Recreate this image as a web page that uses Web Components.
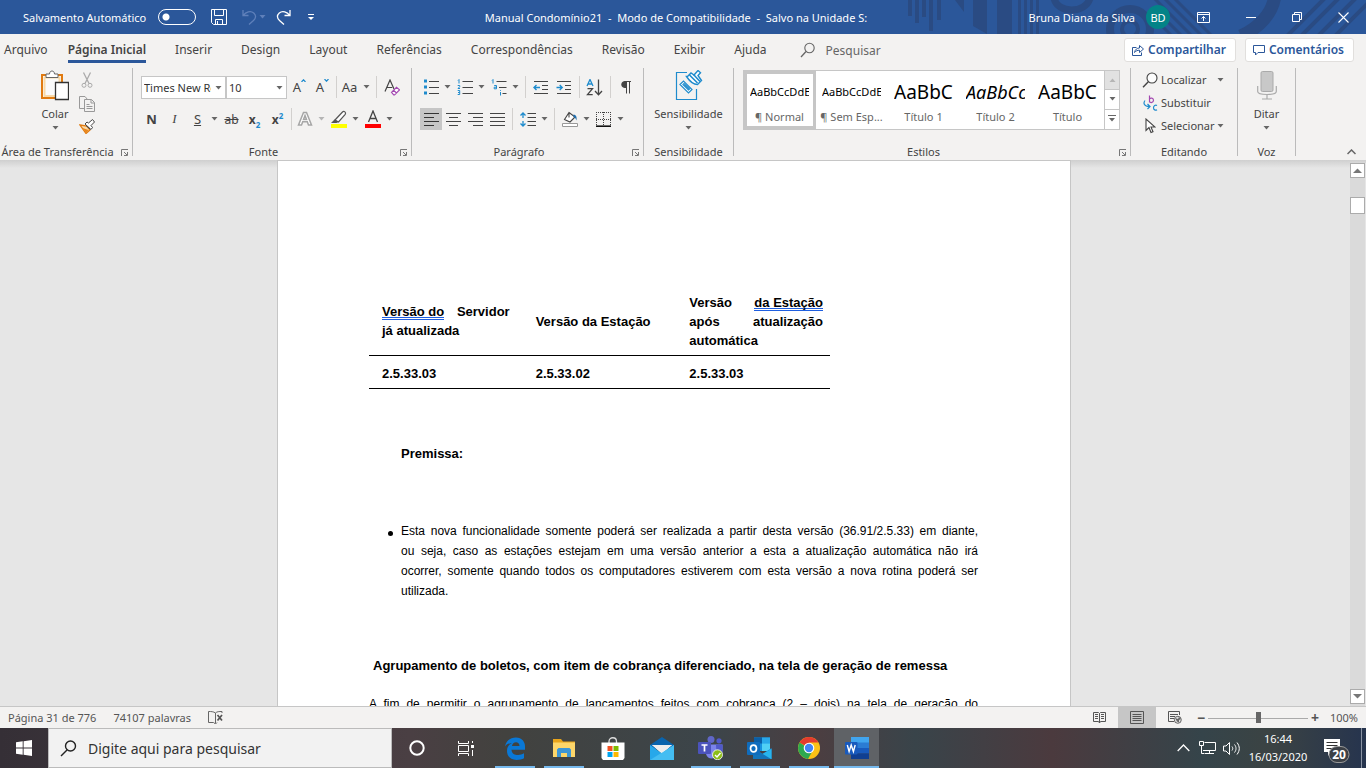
<!DOCTYPE html>
<html lang="pt-BR">
<head>
<meta charset="utf-8">
<title>Manual Condomínio21 - Word</title>
<style>
html,body{height:100%;margin:0}
body{font-family:"Noto Sans","Open Sans",sans-serif;font-size:12px;color:#444;overflow:hidden}
</style>
</head>
<body>
<word-app></word-app>
<script>
const ICONS={
 down:[7,4,'<path d="M0.5 0h6L3.5 3.5z" fill="#666"/>'],
 downLight:[7,4,'<path d="M0.5 0h6L3.5 3.5z" fill="#b5b5b5"/>'],
 up:[7,4,'<path d="M0.5 4h6L3.5 .5z" fill="#b5b5b5"/>'],
 scrollUp:[9,5,'<path d="M0 5h9L4.5 .5z" fill="#777"/>'],
 scrollDown:[9,5,'<path d="M0 0h9L4.5 4.5z" fill="#777"/>'],
 more:[8,8,'<path d="M0 .5h8" stroke="#666"/><path d="M1 3h6L4 6.500z" fill="#666"/>'],
 save:[16,16,'<path d="M.5.5h15v15H2.500l-2-2z M3.500.5v6h9v-6 M4.500 15.500v-5h7v5 M6.500 12v3" fill="none" stroke="#fff"/>'],
 undo:[15,16,'<path d="M1 1v5.500h5.500 M1.200 6.300C4 3 8.500 1.300 11.700 4c2.700 2.400 2.300 5.200-.2 7.500L7 15.500" fill="none" stroke="#5f80ba" stroke-width="1.300"/>'],
 undoDrop:[7,4,'<path d="M0.500 0h6L3.500 3.500z" fill="#5f80ba"/>'],
 redo:[15,16,'<path d="M14 1v5.500H8.500 M13.800 6.300C11 3 6.500 1.300 3.300 4 .6 6.400 1 9.200 3.500 11.500L8 15.500" fill="none" stroke="#fff" stroke-width="1.300"/>'],
 customize:[6,7,'<path d="M0 .5h6" stroke="#fff"/><path d="M0 3h6L3 6z" fill="#fff"/>'],
 ribbonOpts:[13,11,'<path d="M.5.500h12v10H.5z M.5 2.500h12 M6.500 9V4.500 M4.500 6.500l2-2 2 2" fill="none" stroke="#fff"/>'],
 min:[10,10,'<path d="M0 5.500h10" stroke="#fff"/>'],
 restore:[10,10,'<path d="M.5 2.500h7v7h-7z M2.500 2.500v-2h7v7h-2" fill="none" stroke="#fff"/>'],
 close:[11,11,'<path d="M.5.5l10 10M10.500.5l-10 10" stroke="#fff" stroke-width="1.100"/>'],
 search:[16,16,'<circle cx="9.500" cy="6" r="4.700" fill="none" stroke="#666" stroke-width="1.100"/><path d="M6 9.500L1 15" stroke="#666" stroke-width="1.300"/>'],
 share:[12,12,'<path d="M4.500 3.500H.5v8h9V8.500 M2.500 8.500c.5-3 2.500-4.500 5-4.500V1.500l4 3.500-4 3.500V6.200C5.500 6.200 4 6.800 2.500 8.500z" fill="none" stroke="#2b579a"/>'],
 comment:[12,11,'<path d="M.5.5h11v7H5L2.500 10V7.500h-2z" fill="none" stroke="#2b579a"/>'],
 paste:[28,31,'<path d="M1 5h20v23H1z" fill="#fcfcfc" stroke="#e07a10" stroke-width="2"/><path d="M3.500 7.500h15v18.500h-15z" fill="#fafafa" stroke="#f8d9a8" stroke-width="2"/><path d="M5 7.500V4h3.500c0-4 5-4 5 0H17v3.500z" fill="#fff" stroke="#666"/><path d="M14.500 12.500h13v17h-13z" fill="#fff" stroke="#333" stroke-width="1.300"/>'],
 cut:[12,16,'<path d="M2.500.5l5.500 11M9.500.5L4 11.500" stroke="#aaa" stroke-width="1.300" fill="none"/><circle cx="3" cy="13.300" r="2" fill="none" stroke="#aaa"/><circle cx="9" cy="13.300" r="2" fill="none" stroke="#aaa"/>'],
 copy:[16,16,'<path d="M8.500 3.500L6 .5H.5v12h5" fill="none" stroke="#999"/><path d="M5.500 3.500h7l3 3v9h-10z M12 3.500V7h3.500 M7.500 8.500h3M7.500 10.500h6M7.500 12.500h6" fill="none" stroke="#999"/>'],
 brush:[16,15,'<path d="M1 6l7 1 3 4-4 3.500z" fill="#fbd9a5" stroke="#e07a10" stroke-width="1.300"/><path d="M3.500 9l6 2-2.500 3z" fill="#e9861a"/><path d="M6 5l6 5.500 1.500-2-1.500-2L15.500 3l-2-2.500L9.500 4 8 3z" fill="#fff" stroke="#444"/><path d="M7 6.500l4 3.500" stroke="#444"/>'],
 dialog:[7,7,'<path d="M.5 7V.500H7 M3 3l3 3 M6.500 3v3.500H3" fill="none" stroke="#777"/>'],
 collapse:[9,6,'<path d="M.5 5l4-4 4 4" fill="none" stroke="#666" stroke-width="1.500"/>'],
 caretUp:[5,3,'<path d="M.5 3l2-2.200L4.500 3" fill="none" stroke="#1e8bcd" stroke-width="1.200"/>'],
 caretDown:[5,3,'<path d="M.5 0l2 2.200L4.500 0" fill="none" stroke="#1e8bcd" stroke-width="1.200"/>'],
 eraser:[16,17,'<path d="M1 12.500L6 1l4 9M2.700 8.500h5.500" fill="none" stroke="#444" stroke-width="1.200"/><path d="M7.500 13.300l5-5 3 2.500-5 5.200H9.700z M9.500 11.300l3 2.700" fill="#fff" stroke="#a349b1" stroke-width="1.200"/>'],
 textfx:[16,16,'<path d="M1.500 14L6.500 1.500h3l5 12.500h-3l-1.200-3.200H5.700L4.500 14z M8 4.500L6.500 8.500h3z" fill="#fff" stroke="#a6a6a6" stroke-width="1.500"/>'],
 highlight:[18,18,'<path d="M5 10l7.500-8c1.500-1.500 4 .5 2.700 2.300L8.500 12z" fill="#fff" stroke="#555" stroke-width="1.200"/><path d="M4.500 9.500L8.500 12 6.500 13H1z" fill="#555"/><path d="M1 14h16v4H1z" fill="#ff0"/>'],
 fontcolor:[16,18,'<path d="M3.500 12L8 1l4.500 11M5 8.500h6" fill="none" stroke="#444" stroke-width="1.300"/><path d="M0 14h16v4H0z" fill="#f00"/>'],
 bullets:[16,16,'<path d="M1 .5h3v3H1zM1 6.500h3v3H1zM1 12.500h3v3H1z" fill="#1e8bcd"/><path d="M6 2.500h10M6 8.500h10M6 14.500h10" stroke="#444"/>'],
 numbers:[16,17,'<path d="M1 1.500l1-1v4M.7 6.500h2v1.200L1 9.500h2M.7 11.500h2v4h-2M1 13.500h1.500" fill="none" stroke="#1e8bcd"/><path d="M5.500 2.500H16M5.500 8.500H16M5.500 14.500H16" stroke="#444"/>'],
 multi:[16,17,'<path d="M1 1.500l1-1v4M3.200 6.500h2.300v3.300H3.200V8.200h2M9.500 11v.8M9.500 13v3.500" fill="none" stroke="#1e8bcd"/><path d="M5.500 2.500H15.500M8 8.500h7.500M11.500 14.500h4" stroke="#444"/>'],
 outdent:[15,13,'<path d="M1 .5h14M9 4.500h6M9 8.500h6M1 12.500h14" stroke="#444"/><path d="M.8 6.500H7M3.500 4L1 6.500 3.500 9" fill="none" stroke="#1e8bcd" stroke-width="1.400"/>'],
 indent:[15,13,'<path d="M1 .5h14M9 4.500h6M9 8.500h6M1 12.500h14" stroke="#444"/><path d="M.5 6.500h6M3.700 4l2.500 2.500L3.700 9" fill="none" stroke="#1e8bcd" stroke-width="1.400"/>'],
 sort:[17,17,'<path d="M1 7l3-6.500L7 7M2 5h4" fill="none" stroke="#1e8bcd" stroke-width="1.300"/><path d="M1.500 9.700h5l-5 6h5.200" fill="none" stroke="#444" stroke-width="1.300"/><path d="M12.500.5v15M9 12l3.500 3.700L16 12" fill="none" stroke="#444" stroke-width="1.300"/>'],
 pilcrow:[10,13,'<path d="M5 .5h5M5.500.5v12M8.500.5v12" stroke="#444" fill="none"/><path d="M5.500 0h-2C-.8.500-.8 6.500 3.500 7h2z" fill="#444"/>'],
 left:[15,13,'<path d="M0 .5h15M0 4.500h10M0 8.500h15M0 12.500h10" stroke="#333"/>'],
 center:[15,13,'<path d="M0 .5h15M3 4.500h9M0 8.500h15M3 12.500h9" stroke="#444"/>'],
 right:[15,13,'<path d="M0 .5h15M5 4.500h10M0 8.500h15M5 12.500h10" stroke="#444"/>'],
 justify:[15,13,'<path d="M0 .5h15M0 4.500h15M0 8.500h15M0 12.500h15" stroke="#444"/>'],
 spacing:[16,15,'<path d="M3 1v5M.5 3.500L3 1l2.500 2.500M3 9v5M.5 11.500L3 14l2.500-2.500" fill="none" stroke="#1e8bcd" stroke-width="1.300"/><path d="M7.500 1.500H16M7.500 5.500H16M7.500 9.500H16M7.500 13.500H16" stroke="#444"/>'],
 bucket:[16,16,'<path d="M7 1.500L13 6l-5 5L2.500 8.500z M7 1.500v5" fill="#fff" stroke="#444" stroke-width="1.100"/><path d="M11.500 3.500c3 .5 3.500 3 3 6-1-2-1-3-3-3.500z" fill="#1e6fb0"/><path d="M.5 12.500h15v3H.5z" fill="#fff" stroke="#999"/>'],
 borders:[15,15,'<path d="M.5 0v14M14.500 0v14M7.500 0v14M0 .5h15M0 7.500h15" stroke="#444" stroke-dasharray="1 1"/><path d="M0 14.200h15" stroke="#111" stroke-width="1.600"/>'],
 sens:[28,31,'<path d="M12 2.500H1.500v27h20V19" fill="none" stroke="#1e8bcd" stroke-width="1.200"/><path d="M5 14.500l3.500-3.500 8.500 8.500-3.500 3.500z M8 14.500l5.500 5.500 1-1L9 13.500z" fill="#fff" stroke="#1e8bcd" stroke-width="1.200"/><path d="M12.500 6.500l3.500-3.500 3 2 4-4.500 2.500 2.300-2.500 2.700 3.500 5-4 4c-3.500 0-8-3.500-11-8z" fill="#fff" stroke="#1e8bcd" stroke-width="1.400"/><path d="M14.500 5l8 8M18.500 4.500l6.500 7" stroke="#1e8bcd" stroke-width="1.600"/>'],
 find:[16,16,'<circle cx="10" cy="6" r="5" fill="#fdfdfd" stroke="#444" stroke-width="1.100"/><path d="M6.300 9.700L1 15.300" stroke="#444" stroke-width="1.400"/>'],
 replace:[15,16,'<path d="M6.500.5v7M6.500 4c1-1.500 4-1.300 4 1.200s-3 3-4 1.300" fill="none" stroke="#a349b1" stroke-width="1.200"/><path d="M14 10.500c-1.500-1-3.500 0-3.500 2.200s2 3 3.500 2" fill="none" stroke="#1e8bcd" stroke-width="1.200"/><path d="M2 5.500C0 8 1 11.500 6.500 11.500M4.500 9l2.500 2.500L4.500 14" fill="none" stroke="#1e8bcd" stroke-width="1.200"/>'],
 select:[11,16,'<path d="M1 1v11.500l3-3 2 5 2-.8-2-4.700h4z" fill="#fff" stroke="#444" stroke-width="1.100"/>'],
 mic:[20,29,'<rect x="4" y=".5" width="12" height="20" rx="1.500" fill="#c8c8c8" stroke="#aaa"/><path d="M.7 15v5.500c0 4 18.600 4 18.600 0V15M10 23.500V28M5 28h10" fill="none" stroke="#aaa" stroke-width="1.200"/>'],
 proof:[15,13,'<path d="M7.500 12.500V2C5.500.5 3 .5.500.500v11h5l2 1.500 1.500-1.500M7.500 2C9 .5 11 .5 14 .5V2" fill="none" stroke="#666"/><path d="M9.500 4l4.500 5.500M14 4L9.500 9.500" stroke="#555" stroke-width="1.700"/>'],
 read:[13,13,'<path d="M.5 1.500h5l1 1 1-1h5v9h-5l-1 1.500-1-1.500h-5zM6.500 2.500V12M2 3.500h3M2 5.500h3M2 7.500h3M8 3.500h3M8 5.500h3M8 7.500h3" fill="none" stroke="#555"/>'],
 print:[14,13,'<path d="M.5.5h13v12H.5zM2.500 3.500h9M2.500 5.500h9M2.500 7.500h9M2.500 9.500h9" fill="none" stroke="#555"/>'],
 web:[14,13,'<path d="M6 10.500H.5V.500h11V4M2 3.500h8M2 5.500h5M2 7.500h4" fill="none" stroke="#555"/><circle cx="9.800" cy="8.800" r="3.500" fill="#ddd" stroke="#666"/><path d="M7 7l3 1 1-2 2 2-2 1 0 2.500-2-1z" fill="#666"/>'],
 win:[16,16,'<path d="M0 2.300L6.700 1.300v6.300H0zM7.600 1.200L16 0v7.600H7.600zM0 8.400h6.700v6.400L0 13.800zM7.600 8.400H16V16l-8.400-1.200z" fill="#fff"/>'],
 tsearch:[17,17,'<circle cx="10.500" cy="6" r="5" fill="none" stroke="#222" stroke-width="1.400"/><path d="M7 10L1 16" stroke="#222" stroke-width="1.500"/>'],
 cortana:[16,16,'<circle cx="8" cy="8" r="6.700" fill="none" stroke="#fff" stroke-width="2"/>'],
 taskview:[16,15,'<path d="M.5 0v2.500h10V0M.5 15v-2.500h10V15M.5 4.500h10v6H.5zM14.500 0v2M14.500 9v6" fill="none" stroke="#fff"/><path d="M13 4h3v3h-3z" fill="#fff"/>'],
 edge:[22,23,'<path d="M1 9.500C2 4 6.500.5 12 .5c6 0 9 4.500 9 9v3.200H7.500c.2 4 3.500 5.300 6.500 5.300 2.500 0 4-.6 6-1.700v5c-2 1-4.500 1.700-7.500 1.700-5.500 0-9.500-3.500-9.500-9 0-4 2-6.500 5-8C4 6.500 2 8 1 9.500zM8 9h7.500c0-2.500-1.500-3.800-3.500-3.800S8.300 6.500 8 9z" fill="#0a78d6"/>'],
 folder:[22,20,'<path d="M0 1h8l2 2.500h12V18H0z" fill="#e8a41b"/><path d="M0 4.500h22V19H0z" fill="#fdd66a"/><path d="M4 19v-7.500l1.500-1.500h11L18 11.500V19h-4v-4H8v4z" fill="#3d96d6"/>'],
 store:[24,23,'<path d="M8 7V4.500c0-5 7.500-5 7.500 0V7" fill="none" stroke="#ddd" stroke-width="1.300"/><path d="M.5 5.500h23v15.500l-1.500 2h-20l-1.500-2z" fill="#fff"/><path d="M6.500 9h5v5h-5z" fill="#f25022"/><path d="M12.500 9h5v5h-5z" fill="#7fba00"/><path d="M6.500 15h5v5h-5z" fill="#00a4ef"/><path d="M12.500 15h5v5h-5z" fill="#ffb900"/>'],
 mail:[24,23,'<path d="M0 8L12 0l12 8v4H0z" fill="#0a64ad"/><path d="M2 8h20L12 17z" fill="#f3f3f3"/><path d="M0 8l12 8.500L24 8v15H0z" fill="#27a8ea"/><path d="M0 23L24 8v15z" fill="#44bdf2"/><path d="M2 8h20L12 15.500z" fill="#eee"/>'],
 teams:[25,24,'<circle cx="13" cy="3.500" r="3.500" fill="#6067c8"/><circle cx="21" cy="4.800" r="2.600" fill="#5059c9"/><path d="M8 8.500h16.500V15c0 5-4 6-6 5-1.500 3-9 4-10.500-2z" fill="#7b83eb"/><path d="M18 8.500h6.500V15c0 4-4 5.500-6 4.500z" fill="#5059c9"/><rect y="6" width="13" height="12" rx="1" fill="#4b53bc"/><path d="M3.500 9h6M6.500 9v6.500" stroke="#fff" stroke-width="1.700"/><circle cx="19.500" cy="18.800" r="5" fill="#8cbd18" stroke="#fff" stroke-width=".8"/><path d="M17 19l2 2 3.500-4" stroke="#fff" stroke-width="1.400" fill="none"/>'],
 outlook:[25,23,'<path d="M7 .5h16V14H7z" fill="#1490df"/><path d="M7 .5h8v6H7z" fill="#0a5fa8"/><path d="M15 .5h8v6h-8z" fill="#28a8ea"/><path d="M15 6.500h8V14h-8z" fill="#50d0f5"/><path d="M6 11l9.500 6L24.500 11v11H6z" fill="#1b8ddb"/><path d="M6 22L24.500 12v10z" fill="#28b5ee"/><path d="M6 11l18 11H6z" fill="#1374bb"/><rect y="5" width="13" height="13" rx="1" fill="#0f6cbd"/><ellipse cx="6.500" cy="11.500" rx="3" ry="3.400" fill="none" stroke="#fff" stroke-width="1.700"/>'],
 chrome:[22,22,'<circle cx="11" cy="11" r="11" fill="#fbc116"/><path d="M11 11L1.500 5.500a11 11 0 0 1 19 0z" fill="#e33b2e"/><path d="M1.500 5.500a11 11 0 0 0 8.500 16.400l4.500-8z" fill="#2da94f"/><path d="M11 5.500h9.500L15 13z" fill="#fbc116"/><circle cx="11" cy="11" r="5.300" fill="#fff"/><circle cx="11" cy="11" r="4.200" fill="#4284f4"/>'],
 word:[24,22,'<path d="M6 0h18v6H6z" fill="#41a5ee"/><path d="M6 5.500h18v6H6z" fill="#2b7cd3"/><path d="M6 11h18v5.500H6z" fill="#185abd"/><path d="M6 16.300h18V22H6z" fill="#103f91"/><rect y="5" width="12.500" height="12.500" rx="1" fill="#185abd"/><path d="M2.300 8l1.800 6.500L6.200 8l2.200 6.500L10.200 8" fill="none" stroke="#fff" stroke-width="1.400"/>'],
 tup:[13,8,'<path d="M.7 7l5.800-6 5.800 6" fill="none" stroke="#fff" stroke-width="1.300"/>'],
 net:[17,14,'<path d="M5.500 1.500h11v8H4M10.500 9.500v3M6 12.500h9M.5.500h4v4h-4zM2.500 4.500v8h3" fill="none" stroke="#fff"/>'],
 vol:[17,15,'<path d="M.5 5v5H3l3.500 3.500v-12L3 5z M9 5.500c1 1.500 1 2.500 0 4M11.500 3.500c2 2.500 2 5.500 0 8M14 1.500c3 4 3 8 0 12" fill="none" stroke="#fff"/>'],
 action:[26,26,'<path d="M0 0h16v13H7l-3 4v-4H0z" fill="#fff"/><path d="M2.500 3.500h11M2.500 6.500h11M2.500 9.500h7" stroke="#333"/><rect x="5" y="7.500" width="20" height="16" rx="8" fill="#3c4046" stroke="#999"/>'],
 pattern:[476,34,'<g fill="#2a4b83"><path d="M18 0h4v16h-4zM25 0h4v23h-4zM32 0h4v17h-4zM39 0h4v31h-4zM47 0h4v20h-4zM65 0h9v12zM83 0h14v34L83 26zM107 0h15v34h-15zM128 0h3v34h-3zM134 0h3v34h-3zM140 0h3v34h-3zM146 0h3v34h-3z"/></g><g fill="none" stroke="#2a4b83"><circle cx="240" cy="29" r="20" stroke-width="8"/><circle cx="240" cy="29" r="8" stroke-width="4"/><path d="M164-2c3 16 32 16 36 0" stroke-width="7"/><path d="M385-5c-2 18-16 33-34 41" stroke-width="13"/><path d="M284-2l38 38M274-2l38 38M264-2l38 38M264 8l28 28M264 18l18 18" stroke-width="3"/><path d="M397 36l38-38M411 36l38-38M428 36l38-38M445 36l34-34" stroke-width="4"/></g>']
};
const define=(tag,css,html)=>customElements.define(tag,class extends HTMLElement{
  constructor(){
    super();
    this.attachShadow({mode:'open'}).innerHTML=`<style>*{box-sizing:border-box}button,select,input{font:inherit;color:inherit}${css}</style>${typeof html==='function'?html(this):html}`;
  }
});
const i=n=>`<ui-icon name="${n}"></ui-icon>`;

customElements.define('ui-icon',class extends HTMLElement{
  constructor(){super();this.attachShadow({mode:'open'})}
  connectedCallback(){
    const [w,h,b]=ICONS[this.getAttribute('name')];
    this.shadowRoot.innerHTML=`<style>:host{display:block;flex:none}svg{display:block}</style><svg width="${w}" height="${h}" viewBox="0 0 ${w} ${h}" aria-hidden="true">${b}</svg>`;
  }
});

customElements.define('tool-button',class extends HTMLElement{
  constructor(){super();this.attachShadow({mode:'open'})}
  connectedCallback(){
    const l=this.getAttribute('label'),d=this.hasAttribute('drop');
    this.shadowRoot.innerHTML=`<style>
      :host{display:flex;flex:none;height:22px}
      button{display:flex;align-items:center;justify-content:center;border:0;padding:0;background:none;color:#444;font:inherit;font-size:13px;height:22px;width:23px}
      .d{width:11px}
      :host([tight]) button{width:22px}
      :host([on]) button{background:#c6c6c6}
    </style><button aria-label="${l}"><slot></slot></button>${d?`<button class="d" aria-label="${l}: opções">${i(this.getAttribute('drop')||'down')}</button>`:''}`;
  }
});
define('tool-sep',':host{display:flex;flex:none;width:8px;height:22px;justify-content:center}:host([narrow]){width:4px}i{width:1px;background:#d2d0ce}','<i></i>');

define('ribbon-group',`
  :host{display:grid;grid-template-rows:76px 16px;border-right:1px solid #bbb;flex:none;height:88px;font-size:11px}
  footer{display:grid;grid-template-columns:1fr auto 1fr;align-items:center;line-height:14px;padding:0 4px;white-space:nowrap;height:16px}
  ui-icon{justify-self:end}
  span{grid-column:2}
  :host([dialog]) span{grid-column:1/3;text-align:center;padding-right:4px}
  :host([dialog]) footer{grid-template-columns:1fr auto 9px;padding-left:0}
`,e=>`<slot></slot><footer><span>${e.getAttribute('label')||''}</span>${e.hasAttribute('dialog')?i('dialog'):''}</footer>`);

define('big-button',`
  :host{display:block}
  button{border:0;background:none;padding:2px 0 0;width:100%;display:flex;flex-direction:column;align-items:center;color:#444;font-size:11px;line-height:15px;gap:5px}
  .p{height:31px;display:flex;align-items:center}
`,e=>`<button><span class="p">${i(e.getAttribute('icon'))}</span><span><slot></slot></span>${i('down')}</button>`);

define('title-bar',`
  :host{display:grid;grid-template-columns:1fr 400px 1fr;align-items:center;height:34px;background:#2b579a;color:#fff;padding-right:14px;font-size:11px;position:relative}
  .bg{position:absolute;right:0;top:0;height:34px;overflow:hidden}
  button{border:0;background:none;padding:0;color:#fff;display:flex;align-items:center;gap:2px}
  .l,.r{display:flex;align-items:center;position:relative;white-space:nowrap}
  .l{padding-left:23px}
  .l label{display:flex;gap:12px;align-items:center;margin-right:15px}
  input{appearance:none;margin:0;width:38px;height:16px;border:1px solid #fff;border-radius:8px;background:radial-gradient(circle at 7px 7px,#fff 3px,transparent 4px)}
  .q{display:grid;grid-template-columns:31px 34px 32px auto;align-items:center}
  h1{font:inherit;margin:0;text-align:center;white-space:nowrap;position:relative}
  .r{justify-content:flex-end}
  .av{width:24px;height:24px;border-radius:12px;background:#038387;justify-content:center;display:flex;align-items:center;margin:0 27px 0 11px}
  .w{display:flex;gap:36px;align-items:center;padding-right:3px}
`,`<div class="bg">${i('pattern')}</div>
  <div class="l"><label>Salvamento Automático<input type="checkbox"></label>
  <div class="q"><button aria-label="Salvar">${i('save')}</button><button aria-label="Desfazer">${i('undo')}${i('undoDrop')}</button><button aria-label="Refazer">${i('redo')}</button><button aria-label="Personalizar">${i('customize')}</button></div></div>
  <h1>Manual Condomínio21 &nbsp;- &nbsp;Modo de Compatibilidade &nbsp;- &nbsp;Salvo na Unidade S:</h1>
  <div class="r"><span>Bruna Diana da Silva</span><span class="av">BD</span><div class="w"><button aria-label="Opções da faixa">${i('ribbonOpts')}</button><button aria-label="Minimizar">${i('min')}</button><button aria-label="Restaurar">${i('restore')}</button><button aria-label="Fechar">${i('close')}</button></div></div>`);

define('tab-strip',`
  :host{display:flex;align-items:center;justify-content:space-between;height:32px;background:#f3f2f1;padding:0 12px 0 4px;font-size:12px}
  nav,.r{display:flex;align-items:center}
  nav{gap:29px;white-space:nowrap}
  a{color:#444;text-decoration:none;line-height:20px;padding-top:2px;border-bottom:3px solid transparent}
  a:first-child{margin-right:-9px}
  .on{font-weight:600;border-color:#2b579a}
  nav button{border:0;background:none;padding:0 0 0 4px;display:flex;gap:10px;align-items:center;color:#666}
  .r{gap:9px}
  .r button{height:24px;border:1px solid #e1dfdd;border-radius:3px;background:#fff;color:#2b579a;font-weight:600;display:flex;align-items:center;gap:4px;padding:0 9px 0 7px;line-height:20px}
`,`<nav>${['Arquivo','Página Inicial','Inserir','Design','Layout','Referências','Correspondências','Revisão','Exibir','Ajuda'].map((t,k)=>`<a href="#"${k==1?' class="on"':''}>${t}</a>`).join('')}<button>${i('search')}Pesquisar</button></nav>
<div class="r"><button>${i('share')}Compartilhar</button><button>${i('comment')}Comentários</button></div>`);

define('font-combo',`
  :host{display:flex;position:relative;flex:none}
  select{appearance:none;border:1px solid #c6c6c6;border-radius:0;background:#fff;padding:0 14px 0 2px;height:23px;width:100%;font-size:11px;color:#333;text-overflow:clip}
  ui-icon{position:absolute;right:4px;top:10px}
`,e=>`<select aria-label="${e.getAttribute('label')}"><option>${e.getAttribute('value')}</option></select>${i('down')}`);

define('style-card',`
  :host{display:block;flex:1 1 72px;min-width:0}
  button{width:100%;height:58px;border:3px solid transparent;background:#fff;padding:2px 4px 0 3px;display:grid;grid-template-columns:100%;grid-template-rows:32px 18px;align-items:center;justify-items:center;overflow:hidden}
  :host([on]) button{border-color:#c6c6c6}
  .s{color:#000;width:100%;overflow:hidden;white-space:nowrap;text-align:left;font-size:11px;line-height:24px}
  :host([big]) .s{font-size:19px}
  :host([it]) .s{font-style:italic;font-size:18px}
  .n{font-size:11px;color:#666;line-height:16px;white-space:nowrap}
`,e=>`<button><span class="s">${e.getAttribute('sample')}</span><span class="n"><slot></slot></span></button>`);

define('ribbon-bar',`
  :host{display:flex;height:94px;background:#f3f2f1;padding-top:2px;position:relative}
  .g1{width:133px}.g2{width:279px}.g3{width:232px}.g4{width:90px}.g5{flex:1 1 397px}.g6{width:107px}.g7{width:58px}
  .end{width:70px;flex:none;display:flex;align-items:flex-end;justify-content:flex-end;padding:0 10px 5px}
  .end button,.mini button,.ed button,.sc button{border:0;background:none;padding:0}
  .clip{display:grid;grid-template-columns:40px 20px;padding-left:35px;column-gap:2px}
  .mini{display:grid;grid-template-rows:24px 23px 23px;align-items:center;justify-items:center}
  .mini button{display:flex}
  .rows{display:grid;grid-template-rows:22px 22px;row-gap:10px;padding:8px 0 0 7px;align-content:start}
  .row{display:flex}
  .fn{width:85px}.fs{width:61px;margin-right:1px}
  .f .row:first-child{padding-left:1px}
  .p .row:last-child{padding-left:1px}
  sub,sup{font-size:8px;line-height:8px;color:#1e8bcd;font-weight:700}
  .ab{font-size:12px}
  .caret{display:flex;align-items:flex-start;line-height:16px}
  .gal{display:flex;margin:2px 10px 0 9px;border:1px solid #c6c6c6;background:#fff;height:60px}
  .sc{display:grid;grid-template-rows:1fr 1fr 1fr;width:15px;flex:none;border-left:1px solid #c6c6c6}
  .cards{display:flex;flex:1;min-width:0}
  .sc button{display:grid;place-items:center;border-bottom:1px solid #c6c6c6}
  .sc button:first-child{background:#e1e1e1}.sc button:last-child{border:0}
  .ed{display:grid;grid-template-rows:23px 23px 23px;padding-left:11px;align-items:center}
  .ed button{display:grid;grid-template-columns:16px 53px auto;column-gap:3px;justify-content:start;align-items:center;font-size:11px;color:#444;width:100%;text-align:left}
  .ed ui-icon:first-child{justify-self:center}
`,`
<ribbon-group class="g1" label="Área de Transferência" dialog><div class="clip"><big-button icon="paste">Colar</big-button><div class="mini"><button aria-label="Recortar">${i('cut')}</button><button aria-label="Copiar">${i('copy')}</button><button aria-label="Pincel de Formatação">${i('brush')}</button></div></div></ribbon-group>
<ribbon-group class="g2" label="Fonte" dialog><div class="rows f">
 <div class="row"><font-combo class="fn" label="Fonte" value="Times New Roman"></font-combo><font-combo class="fs" label="Tamanho" value="10"></font-combo>
 <tool-button label="Aumentar"><span class="caret">A${i('caretUp')}</span></tool-button><tool-button label="Diminuir"><span class="caret">A${i('caretDown')}</span></tool-button><tool-sep narrow></tool-sep><tool-button label="Maiúsculas e minúsculas" drop>Aa</tool-button><tool-sep></tool-sep><tool-button label="Limpar formatação">${i('eraser')}</tool-button></div>
 <div class="row"><tool-button label="Negrito"><b>N</b></tool-button><tool-button label="Itálico"><i style="font-family:'Liberation Serif',serif">I</i></tool-button><tool-button label="Sublinhado" drop><u>S</u></tool-button><tool-button label="Tachado"><s class="ab">ab</s></tool-button><tool-button label="Subscrito"><span><b class="ab">x</b><sub>2</sub></span></tool-button><tool-button label="Sobrescrito"><span><b class="ab">x</b><sup>2</sup></span></tool-button><tool-sep narrow></tool-sep><tool-button label="Efeitos de texto" drop="downLight">${i('textfx')}</tool-button><tool-button label="Realce" drop>${i('highlight')}</tool-button><tool-button label="Cor da fonte" drop>${i('fontcolor')}</tool-button></div>
</div></ribbon-group>
<ribbon-group class="g3" label="Parágrafo" dialog><div class="rows p">
 <div class="row"><tool-button label="Marcadores" drop>${i('bullets')}</tool-button><tool-button label="Numeração" drop>${i('numbers')}</tool-button><tool-button label="Vários níveis" drop>${i('multi')}</tool-button><tool-sep></tool-sep><tool-button label="Diminuir recuo">${i('outdent')}</tool-button><tool-button label="Aumentar recuo">${i('indent')}</tool-button><tool-sep></tool-sep><tool-button label="Classificar">${i('sort')}</tool-button><tool-sep></tool-sep><tool-button label="Mostrar tudo">${i('pilcrow')}</tool-button></div>
 <div class="row"><tool-button tight on label="À esquerda">${i('left')}</tool-button><tool-button tight label="Centralizar">${i('center')}</tool-button><tool-button tight label="À direita">${i('right')}</tool-button><tool-button tight label="Justificar">${i('justify')}</tool-button><tool-sep></tool-sep><tool-button label="Espaçamento" drop>${i('spacing')}</tool-button><tool-sep></tool-sep><tool-button label="Sombreamento" drop>${i('bucket')}</tool-button><tool-button label="Bordas" drop>${i('borders')}</tool-button></div>
</div></ribbon-group>
<ribbon-group class="g4" label="Sensibilidade"><big-button icon="sens">Sensibilidade</big-button></ribbon-group>
<ribbon-group class="g5" label="Estilos" dialog><div class="gal"><div class="cards"><style-card on sample="AaBbCcDdE">¶ Normal</style-card><style-card sample="AaBbCcDdE">¶ Sem Esp...</style-card><style-card big sample="AaBbC">Título 1</style-card><style-card it sample="AaBbCc">Título 2</style-card><style-card big sample="AaBbC">Título</style-card></div><div class="sc"><button aria-label="Acima">${i('up')}</button><button aria-label="Abaixo">${i('down')}</button><button aria-label="Mais">${i('more')}</button></div></div></ribbon-group>
<ribbon-group class="g6" label="Editando"><div class="ed"><button>${i('find')}<span>Localizar</span>${i('down')}</button><button>${i('replace')}<span>Substituir</span></button><button>${i('select')}<span>Selecionar</span>${i('down')}</button></div></ribbon-group>
<ribbon-group class="g7" label="Voz"><big-button icon="mic">Ditar</big-button></ribbon-group>
<div class="end"><button aria-label="Recolher a faixa">${i('collapse')}</button></div>`);

define('doc-page',`
  :host{display:block;width:794px;flex:none;background:#fff;border:1px solid #c6c6c6;border-bottom:0;box-sizing:border-box;padding:130px 91px 0;font:12px/20px "Liberation Sans",Arial,sans-serif;color:#000}
  table{border-collapse:collapse;width:461px;table-layout:fixed;font-size:13px}
  th,td{text-align:justify;font-weight:700;padding:0 13px;line-height:19px}
  th:last-child,td:last-child{padding-right:7px}
  th{height:64px;border-bottom:1px solid #000;padding-bottom:3px}
  td{height:33px;border-bottom:1px solid #000;padding-top:3px}
  .g{display:inline-block;white-space:nowrap;line-height:19px;background:linear-gradient(#1f5fe0 0 1px,#fff 1px 2px,#1f5fe0 2px 3px) left bottom 1px/100% 3px no-repeat}
  h2,h3{font-size:13px;line-height:20px;margin:0}
  h3{margin:55px 32px 57px}
  ul{margin:0;padding:0 0 0 32px;list-style:none;text-align:justify;text-align-last:justify;width:609px;white-space:nowrap}
  li{position:relative}
  li::before{content:"";position:absolute;left:-13px;top:10px;width:5px;height:5px;border-radius:3px;background:#000}
  .end{display:block;text-align-last:left}
  h2{margin:55px 4px 18px}
  p{margin:0;text-align:justify;text-align-last:justify;width:609px;white-space:nowrap}
`,`<table><thead><tr><th><span class="g">Versão do</span> Servidor já atualizada</th><th>Versão da Estação</th><th>Versão <span class="g">da Estação</span> após atualização automática</th></tr></thead><tbody><tr><td>2.5.33.03</td><td>2.5.33.02</td><td>2.5.33.03</td></tr></tbody></table>
<h3>Premissa:</h3>
<ul><li>Esta nova funcionalidade somente poderá ser realizada a partir desta versão (36.91/2.5.33) em diante,<br>ou seja, caso as estações estejam em uma versão anterior a esta a atualização automática não irá<br>ocorrer, somente quando todos os computadores estiverem com esta versão a nova rotina poderá ser<span class="end">utilizada.</span></li></ul>
<h2>Agrupamento de boletos, com item de cobrança diferenciado, na tela de geração de remessa</h2>
<p>A fim de permitir o agrupamento de lançamentos feitos com cobrança (2 – dois) na tela de geração do</p>`);

define('doc-area',`
  :host{display:flex;flex:1;min-height:0;background:linear-gradient(#cfcfcf,#e6e6e6 8px)}
  main{flex:1;display:flex;justify-content:center;overflow:hidden;padding:1px 2px 0 0}
  doc-page{margin-top:-1px}
  aside{width:16px;display:flex;flex-direction:column;background:#dadada;border-right:1px solid #e6e6e6;margin-top:3px;padding-bottom:2px}
  button{height:15px;width:15px;border:1px solid #ababab;background:#fff;padding:0;display:grid;place-items:center;flex:none}
  .t{height:17px;width:15px;border:1px solid #ababab;background:#fff;margin:19px 0 auto}
`,`<main><doc-page></doc-page></main><aside><button aria-label="Rolar para cima">${i('scrollUp')}</button><div class="t"></div><button aria-label="Rolar para baixo">${i('scrollDown')}</button></aside>`);

define('status-bar',`
  :host{display:flex;justify-content:space-between;height:22px;background:#f3f2f1;border-top:1px solid #c6c6c6;font-size:11px;color:#555;box-sizing:border-box;padding:0 8px}
  div{display:flex;align-items:center}
  .l{gap:17px}
  button{border:0;background:none;padding:0;display:grid;place-items:center;height:21px}
  .v{width:38px}.on{background:#c6c6c6}
  .z{width:14px;font-size:14px;font-weight:700}
  input{appearance:none;width:100px;margin:0;height:12px;background:linear-gradient(#aaa,#aaa) 0 6px/100% 1px no-repeat}
  input::-webkit-slider-thumb{appearance:none;width:5px;height:11px;background:#666}
  .r span{width:36px;text-align:right}
`,`<div class="l"><span>Página 31 de 776</span><span>74107 palavras</span>${i('proof')}</div><div class="r"><button class="v" aria-label="Modo de Leitura">${i('read')}</button><button class="v on" aria-label="Layout de Impressão">${i('print')}</button><button class="v" aria-label="Layout da Web">${i('web')}</button><button class="z" aria-label="Menos zoom">−</button><input type="range" aria-label="Zoom" min="0" max="200" value="100"><button class="z" aria-label="Mais zoom">+</button><span>100%</span></div>`);

define('task-bar',`
  :host{display:flex;height:40px;background:linear-gradient(90deg,#352f36,#4a3f43 30%,#42423f 37%,#3c454a 52%,#4b3e41 60%,#39444a 67%,#4b3a3e 77%,#35444a 88%,#3b4343 93%,#26344e);color:#fff}
  button{border:0;background:none;padding:0;display:grid;place-items:center;color:#fff}
  .s{width:48px}
  label{width:344px;display:flex;align-items:center;background:#f2f2f2;border:1px solid #bbb;padding-left:11px;gap:11px}
  input{border:0;background:none;padding:0;flex:1;min-width:0;font-size:14px}
  input::placeholder{color:#333;opacity:1}
  .a{width:49px}
  .run{background:linear-gradient(#76b9ed,#76b9ed) center bottom/40px 2px no-repeat}
  .cur{background:linear-gradient(#76b9ed,#76b9ed) center bottom/100% 2px no-repeat #5f6266;width:45px;margin-left:1px}
  .t{display:flex;align-items:center;margin-left:auto;border-right:1px solid #8a93a3;margin-right:4px}
  .t button{width:24px;height:40px}
  .t .c{width:70px;font-size:11px;line-height:18px;display:block;height:36px}
  .t .n{width:48px;position:relative;padding-top:7px}
  .n b{position:absolute;left:11px;top:18px;width:30px;text-align:center;font-size:12px;line-height:18px}
`,`<button class="s" aria-label="Iniciar">${i('win')}</button><label>${i('tsearch')}<input placeholder="Digite aqui para pesquisar" aria-label="Pesquisar"></label>
${[['cortana',''],['taskview',''],['edge','run'],['folder','run'],['store',''],['mail',''],['teams','run'],['outlook','run'],['chrome','run'],['word','cur']].map(([n,c])=>`<button class="a ${c}" aria-label="${n}">${i(n)}</button>`).join('')}
<div class="t"><button aria-label="Ícones ocultos">${i('tup')}</button><button aria-label="Rede">${i('net')}</button><button aria-label="Volume">${i('vol')}</button><button class="c">16:44<br>16/03/2020</button><button class="n" aria-label="Notificações">${i('action')}<b>20</b></button></div>`);

define('word-app',':host{display:flex;flex-direction:column;height:100vh}',
`<title-bar></title-bar><tab-strip></tab-strip><ribbon-bar></ribbon-bar><doc-area></doc-area><status-bar></status-bar><task-bar></task-bar>`);
</script>
</body>
</html>
